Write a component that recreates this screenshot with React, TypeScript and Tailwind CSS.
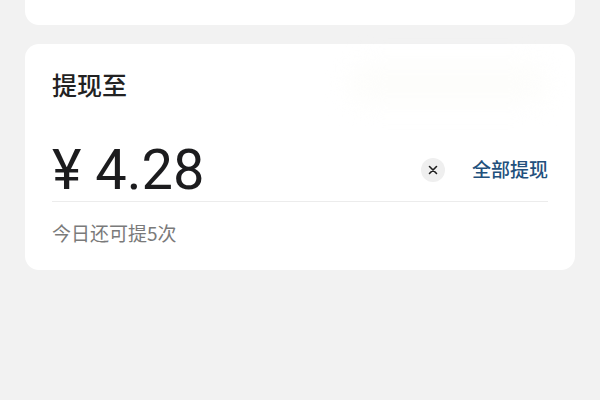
import React from "react";

const cjk = { fontFamily: '"Noto Sans CJK SC", "Noto Sans", sans-serif' };
const num = { fontFamily: 'Roboto, "Noto Sans CJK SC", sans-serif' };

const WithdrawCard = () => {
  return (
    <div className="bg-white rounded-[14px] px-[27px] pt-[24px] pb-[24px]">
      {/* Header */}
      <div className="flex items-center justify-between h-[32px]">
        <span className="text-[25px] leading-[32px] font-medium text-[#222]" style={cjk}>
          提现至
        </span>
        {/* account info, blurred out in the original */}
        <div className="w-[200px] h-[40px] rounded-full bg-[#fdfdfb] blur-md" />
      </div>

      {/* Amount */}
      <div className="mt-[38px] h-[64px] flex items-center border-b border-[#ececec]">
        <span className="text-[56px] leading-[64px] text-[#1c1c1e] flex-1" style={num}>
          ¥ 4.28
        </span>
        <button className="w-[24px] h-[24px] rounded-full bg-[#efefef] flex items-center justify-center mr-[27px]">
          <svg viewBox="0 0 10 10" className="w-[10px] h-[10px]">
            <path d="M1.5 1.5 L8.5 8.5 M8.5 1.5 L1.5 8.5" stroke="#1f1f1f" strokeWidth="1.6" strokeLinecap="round" />
          </svg>
        </button>
        <span className="text-[19px] font-medium text-[#22507d]" style={cjk}>
          全部提现
        </span>
      </div>

      {/* Remaining */}
      <p className="mt-[18px] text-[19px] leading-[26px] text-[#7a7a7a]" style={cjk}>
        今日还可提5次
      </p>
    </div>
  );
};

export default function App() {
  return (
    <div className="w-[600px] h-[400px] bg-[#f2f2f2] px-[25px] overflow-hidden">
      <div className="h-[25px] bg-white rounded-b-[14px]" />
      <div className="mt-[19px]">
        <WithdrawCard />
      </div>
    </div>
  );
}
